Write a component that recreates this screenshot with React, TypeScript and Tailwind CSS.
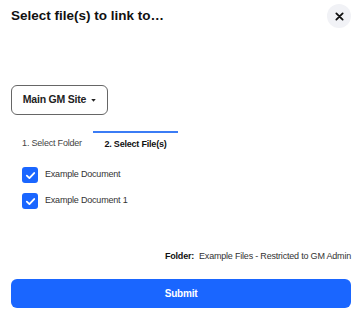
import React from 'react';

const font = { fontFamily: '"Liberation Sans", Arial, sans-serif' };

const Check = () => (
  <span className="flex h-4 w-4 items-center justify-center rounded-[3px] bg-[#1a66ff]">
    <svg width="11" height="11" viewBox="0 0 12 12" fill="none">
      <path d="M2 6.2 4.8 8.8 10 3.3" stroke="white" strokeWidth="2" strokeLinecap="round" strokeLinejoin="round" />
    </svg>
  </span>
);

export default function App() {
  const docs = ['Example Document', 'Example Document 1'];

  return (
    <div className="flex h-[316px] w-[360px] flex-col bg-white pl-[11px] pr-[9px] text-[#222]" style={font}>
      {/* header */}
      <div className="flex h-[32px] items-center justify-between">
        <h1 className="text-[13.5px] font-bold text-[#111]">Select file(s) to link to…</h1>
        <button className="flex h-6 w-6 items-center justify-center rounded-full bg-[#f1f2f6]">
          <svg width="9" height="9" viewBox="0 0 10 10">
            <path d="M1.5 1.5 8.5 8.5M8.5 1.5 1.5 8.5" stroke="#111" strokeWidth="2" strokeLinecap="round" />
          </svg>
        </button>
      </div>

      {/* site dropdown */}
      <button className="mt-[53px] flex h-[30px] w-[97px] items-center justify-center gap-[5px] rounded-[6px] border border-[#666] text-[10.5px] font-bold tracking-[-0.2px] text-[#222]">
        Main GM Site
        <svg width="5" height="3" viewBox="0 0 6 4">
          <path d="M0 0h6L3 3.5z" fill="#222" />
        </svg>
      </button>

      {/* tabs */}
      <div className="mt-[16px] flex h-[26px] text-[9px] tracking-[-0.2px]">
        <div className="flex w-[82px] items-center justify-center text-[#444]">1. Select Folder</div>
        <div className="flex w-[85px] items-center justify-center border-t-2 border-[#3b7cf5] font-bold text-[#111]">
          2. Select File(s)
        </div>
      </div>

      {/* files */}
      <div className="mt-[10px] flex flex-col gap-[10px] pl-[11px]">
        {docs.map((d) => (
          <label key={d} className="flex items-center gap-[7px] text-[9px] tracking-[-0.2px] text-[#333]">
            <Check />
            {d}
          </label>
        ))}
      </div>

      {/* folder */}
      <div className="mt-[41px] flex justify-end gap-[5px] text-[9px] tracking-[-0.2px] text-[#333]">
        <span className="font-bold text-[#111]">Folder:</span>
        <span>Example Files - Restricted to GM Admin</span>
      </div>

      <button className="mb-[8px] mt-auto h-[29px] w-full rounded-[6px] bg-[#1a66ff] text-[10px] font-bold tracking-[-0.2px] text-white">
        Submit
      </button>
    </div>
  );
}
